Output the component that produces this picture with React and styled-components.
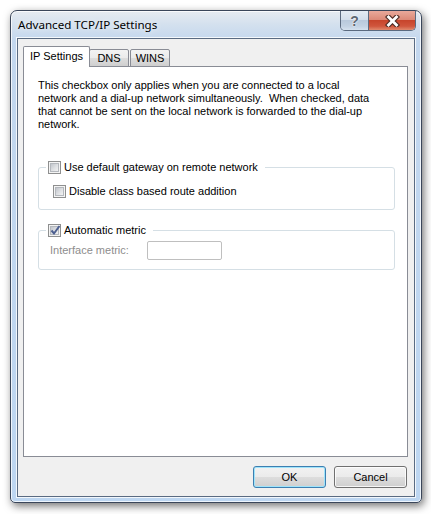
import React from "react";
import styled, { createGlobalStyle } from "styled-components";

const GlobalStyle = createGlobalStyle`
  html, body {
    margin: 0;
    padding: 0;
    background: #fff;
  }
  body {
    font-family: "Liberation Sans", Arial, sans-serif;
    font-size: 11px;
  }
`;

const Page = styled.div`
  padding: 10px 0 0 10px;
  width: 431px;
  height: 514px;
  box-sizing: border-box;
`;

const Window = styled.div`
  width: 412px;
  height: 493px;
  box-sizing: border-box;
  border: 1px solid #3a465a;
  border-radius: 7px 7px 5px 5px;
  background: linear-gradient(180deg, #e6ebf1 0px, #d3e0ee 14px, #c3d7ee 30px, #bdd6f1 100%);
  box-shadow: 2px 3px 8px rgba(0, 0, 0, 0.55), inset 0 0 0 1px rgba(255, 255, 255, 0.75);
  display: flex;
  flex-direction: column;
`;

const TitleBar = styled.div`
  height: 27px;
  flex: none;
  display: flex;
  align-items: flex-start;
  justify-content: space-between;
  padding: 0 5px 0 7px;
`;

const Title = styled.div`
  font-family: "Noto Sans", "Open Sans", sans-serif;
  font-size: 11.6px;
  color: #000;
  padding-top: 6px;
  text-shadow: 0 0 6px rgba(255, 255, 255, 0.9);
`;

const CaptionButtons = styled.div`
  display: flex;
  height: 19px;
  border: 1px solid #5b6a7f;
  border-top: none;
  border-radius: 0 0 5px 5px;
  overflow: hidden;
`;

const CaptionButton = styled.div`
  width: ${(p) => p.$w}px;
  height: 19px;
  display: flex;
  align-items: center;
  justify-content: center;
  background: ${(p) =>
    p.$close
      ? "linear-gradient(180deg, #e9a99b 0%, #dc8a78 45%, #c7452c 50%, #d0563d 80%, #e08a6e 100%)"
      : "linear-gradient(180deg, #e4ebf3 0%, #d3deeb 45%, #b9c9dc 50%, #c3d2e3 80%, #d6e2ef 100%)"};
  & + & {
    border-left: 1px solid #5b6a7f;
  }
`;

const HelpGlyph = styled.span`
  font-family: "Liberation Sans", Arial, sans-serif;
  font-weight: bold;
  font-size: 14px;
  color: #5d6772;
  text-shadow: 0 0 2px #fff, 0 0 1px #fff;
  line-height: 1;
`;

const Client = styled.div`
  flex: 1;
  margin: 0 6px 5px 6px;
  border: 1px solid #5a6b82;
  background: #f0f0f0;
  box-shadow: 0 0 0 1px rgba(255, 255, 255, 0.8);
  display: flex;
  flex-direction: column;
  padding: 8px 6px 7px 5px;
`;

const TabStrip = styled.div`
  display: flex;
  align-items: flex-end;
  height: 20px;
  margin-bottom: -1px;
  position: relative;
  z-index: 1;
`;

const Tab = styled.div`
  box-sizing: border-box;
  width: ${(p) => p.$w}px;
  height: ${(p) => (p.$active ? 21 : 18)}px;
  margin-left: ${(p) => p.$ml || 0}px;
  border: 1px solid #898c95;
  border-bottom: ${(p) => (p.$active ? "none" : "1px solid #898c95")};
  border-radius: 2px 2px 0 0;
  background: ${(p) =>
    p.$active ? "#fff" : "linear-gradient(180deg, #f3f3f3 0%, #ebebeb 50%, #dddddd 51%, #cfcfcf 100%)"};
  display: flex;
  align-items: ${(p) => (p.$active ? "flex-start" : "center")};
  justify-content: center;
  padding-top: ${(p) => (p.$active ? 3 : 0)}px;
  font-size: 11px;
  color: #000;
  white-space: nowrap;
`;

const Panel = styled.div`
  height: 391px;
  box-sizing: border-box;
  border: 1px solid #898c95;
  background: #fff;
  padding: 12px 12px 0 14px;
`;

const Paragraph = styled.p`
  margin: 0;
  line-height: 13px;
  color: #000;
`;

const Line = styled.span`
  display: block;
  white-space: pre;
`;

const Group = styled.fieldset`
  margin: ${(p) => p.$mt}px 0 0 0;
  padding: 0 0 ${(p) => p.$pb}px 0;
  border: 1px solid #d5dfe5;
  border-radius: 3px;
  min-width: 0;
`;

const Legend = styled.legend`
  margin-left: 7px;
  padding: 0 7px 0 2px;
  display: flex;
  align-items: center;
  gap: 3px;
  line-height: 13px;
`;

const Row = styled.div`
  display: flex;
  align-items: center;
  margin: ${(p) => p.$mt}px 0 0 ${(p) => p.$ml}px;
  gap: ${(p) => p.$gap || 3}px;
  line-height: 13px;
`;

const Label = styled.span`
  color: ${(p) => (p.$disabled ? "#8d8d8d" : "#000")};
  white-space: nowrap;
`;

const MetricInput = styled.div`
  width: 75px;
  height: 19px;
  box-sizing: border-box;
  border: 1px solid #bfbfbf;
  border-radius: 2px;
  background: #fff;
`;

const Box = styled.span`
  position: relative;
  width: 13px;
  height: 13px;
  box-sizing: border-box;
  border: 1px solid #8e8f8f;
  background: #f4f4f4;
  flex: none;
  display: inline-block;

  &::before {
    content: "";
    position: absolute;
    inset: 1px;
    border: 1px solid #b4b8bd;
    background: linear-gradient(135deg, #c2c6cc 0%, #dfe1e4 55%, #f2f2f2 100%);
  }

  svg {
    position: absolute;
    left: 0;
    top: -1px;
  }
`;

const ButtonRow = styled.div`
  display: flex;
  justify-content: flex-end;
  gap: 8px;
  margin-top: 9px;
  padding-right: 1px;
`;

const DialogButton = styled.button`
  width: 73px;
  height: 22px;
  font-family: "Liberation Sans", Arial, sans-serif;
  font-size: 11px;
  color: #000;
  border: 1px solid ${(p) => (p.$default ? "#3c7fb1" : "#707070")};
  border-radius: 3px;
  background: linear-gradient(180deg, #f2f2f2 0%, #ebebeb 50%, #dddddd 51%, #cfcfcf 100%);
  box-shadow: inset 0 0 0 1px ${(p) => (p.$default ? "#9fe4fb" : "rgba(255,255,255,0.8)")};
  padding: 0;
`;

const Checkbox = ({ checked }) => (
  <Box>
    {checked && (
      <svg width="13" height="13" viewBox="0 0 13 13">
        <path d="M2.5 6.5 L5 9.5 L10.5 2" fill="none" stroke="#4d5f90" strokeWidth="2" />
      </svg>
    )}
  </Box>
);

const CloseIcon = () => (
  <svg width="15" height="12" viewBox="0 0 15 12">
    <path d="M3.5 2 L11.5 10 M11.5 2 L3.5 10" stroke="#4b2a22" strokeWidth="5" strokeLinecap="square" />
    <path d="M3.5 2 L11.5 10 M11.5 2 L3.5 10" stroke="#fff" strokeWidth="2.8" strokeLinecap="square" />
  </svg>
);

export default function App() {
  return (
    <Page>
      <GlobalStyle />
      <Window>
        <TitleBar>
          <Title>Advanced TCP/IP Settings</Title>
          <CaptionButtons>
            <CaptionButton $w={27}>
              <HelpGlyph>?</HelpGlyph>
            </CaptionButton>
            <CaptionButton $w={46} $close>
              <CloseIcon />
            </CaptionButton>
          </CaptionButtons>
        </TitleBar>
        <Client>
          <TabStrip>
            <Tab $active $w={67}>IP Settings</Tab>
            <Tab $w={40} $ml={-1}>DNS</Tab>
            <Tab $w={40} $ml={1}>WINS</Tab>
          </TabStrip>
          <Panel>
            <Paragraph>
              <Line>This checkbox only applies when you are connected to a local</Line>
              <Line>network and a dial-up network simultaneously.  When checked, data</Line>
              <Line>that cannot be sent on the local network is forwarded to the dial-up</Line>
              <Line>network.</Line>
            </Paragraph>
            <Group $mt={30} $pb={11}>
              <Legend>
                <Checkbox />
                <Label>Use default gateway on remote network</Label>
              </Legend>
              <Row $mt={11} $ml={14}>
                <Checkbox />
                <Label>Disable class based route addition</Label>
              </Row>
            </Group>
            <Group $mt={14} $pb={9}>
              <Legend>
                <Checkbox checked />
                <Label>Automatic metric</Label>
              </Legend>
              <Row $mt={4} $ml={11} $gap={18}>
                <Label $disabled>Interface metric:</Label>
                <MetricInput />
              </Row>
            </Group>
          </Panel>
          <ButtonRow>
            <DialogButton $default>OK</DialogButton>
            <DialogButton>Cancel</DialogButton>
          </ButtonRow>
        </Client>
      </Window>
    </Page>
  );
}
